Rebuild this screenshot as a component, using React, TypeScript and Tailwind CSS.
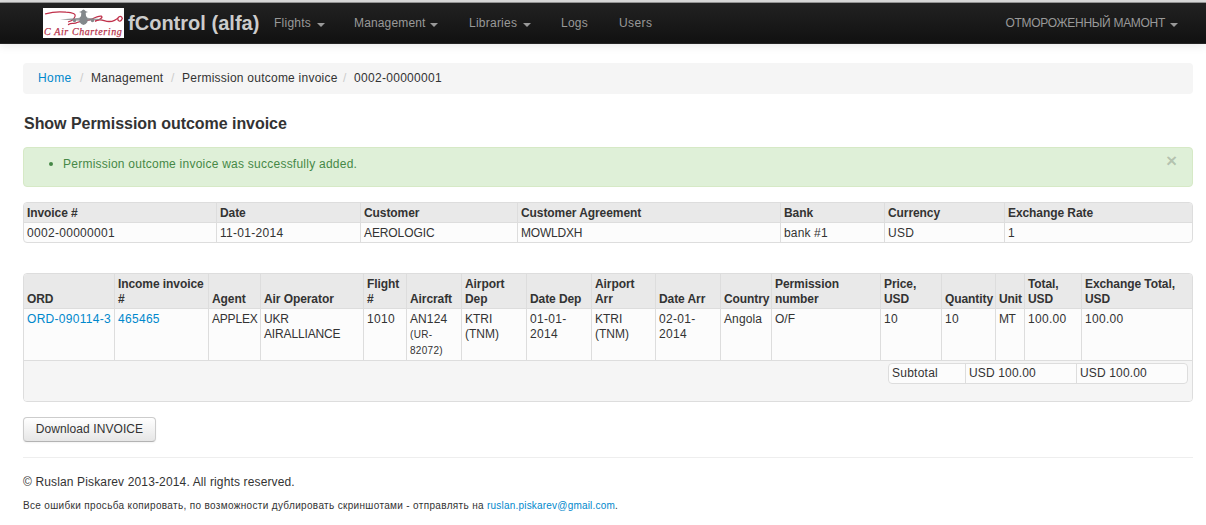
import type { ReactNode } from "react";

const Caret = ({ className = "" }: { className?: string }) => (
  <span className={"inline-block h-0 w-0 border-x-4 border-t-4 border-x-transparent border-t-[#999] " + className} />
);

const Logo = () => (
  <svg className="mt-[5px] h-[30px] w-[81px] shrink-0 bg-white" viewBox="0 0 81 30">
    <g fill="none" stroke="#c0304a" strokeLinecap="round" strokeLinejoin="round">
      <path d="M2.500 5.800C9 4 17 3.500 23 4.200C29 4.500 34 5.500 31.500 9.500C30.500 12 28 13 25.500 13.800" strokeWidth="1.200" />
      <path d="M25.500 16.500C29 14 31 16.500 34 14.500C40 12 45 13 49 11C53 9 56 7.500 58.500 8.200C60.500 9.500 56 12 52.500 13" strokeWidth="1.300" />
      <path d="M52.500 13C58 10 61 13.500 66 13.500C71 13.500 75 10 76 8.800C78 7.500 80.500 10 78.500 12C77 14 74.500 13 75 11" strokeWidth="1.300" />
    </g>
    <g fill="#83888b">
      <path d="M17 11.500L37 9.800H44L61 11.500L44 12.800H37Z" fillOpacity="0.8" />
      <path d="M38.500 3Q40.500 0 42.500 3L43 8L44.500 10V14Q42.500 17 40.500 17Q38.500 17 36.500 14V10L38 8Z" />
      <path d="M36 4L40.500 2.500L45 4L40.500 5.500Z" />
      <circle cx="31.500" cy="12.500" r="1.700" />
      <circle cx="49.500" cy="12.500" r="1.700" />
    </g>
    <text x="1" y="27" textLength="78" fill="#b8364e" stroke="#b8364e" strokeWidth="0.250" fontFamily="Liberation Serif, serif" fontStyle="italic" fontSize="10">
      C Air Chartering
    </text>
  </svg>
);

type Cell = { w: string; head: ReactNode; body: ReactNode };

const invoice: Cell[] = [
  { w: "w-[193px]", head: "Invoice #", body: "0002-00000001" },
  { w: "w-[144px]", head: "Date", body: "11-01-2014" },
  { w: "w-[157px]", head: "Customer", body: <span className="tracking-[-0.1px]">AEROLOGIC</span> },
  { w: "w-[263px]", head: "Customer Agreement", body: <span className="tracking-[-0.2px]">MOWLDXH</span> },
  { w: "w-[104px]", head: "Bank", body: <span className="tracking-[0.15px]">bank #1</span> },
  { w: "w-[120px]", head: "Currency", body: "USD" },
  { w: "w-[188px]", head: "Exchange Rate", body: "1" },
];

const items: Cell[] = [
  { w: "w-[91px]", head: "ORD", body: <a className="text-[#0088cc]">ORD-090114-3</a> },
  { w: "w-[94px]", head: <>Income invoice<br />#</>, body: <a className="text-[#0088cc]">465465</a> },
  { w: "w-[52px]", head: "Agent", body: <span className="tracking-[-0.2px]">APPLEX</span> },
  { w: "w-[103px]", head: "Air Operator", body: <span className="tracking-[-0.15px]">UKR<br />AIRALLIANCE</span> },
  { w: "w-[43px]", head: <>Flight<br />#</>, body: "1010" },
  { w: "w-[55px]", head: "Aircraft", body: <><span className="tracking-[0.1px]">AN124</span><span className="block text-[10px] leading-4">(UR-<br />82072)</span></> },
  { w: "w-[65px]", head: <>Airport<br />Dep</>, body: <span className="tracking-[0px]">KTRI<br />(TNM)</span> },
  { w: "w-[65px]", head: "Date Dep", body: <>01-01-<br />2014</> },
  { w: "w-[64px]", head: <>Airport<br />Arr</>, body: <span className="tracking-[0px]">KTRI<br />(TNM)</span> },
  { w: "w-[65px]", head: "Date Arr", body: <>02-01-<br />2014</> },
  { w: "w-[51px]", head: "Country", body: <span className="tracking-[0.1px]">Angola</span> },
  { w: "w-[109px]", head: <>Permission<br />number</>, body: <span className="tracking-[0px]">O/F</span> },
  { w: "w-[61px]", head: <>Price,<br />USD</>, body: "10" },
  { w: "w-[54px]", head: "Quantity", body: "10" },
  { w: "w-[29px]", head: "Unit", body: <span className="tracking-[-0.5px]">MT</span> },
  { w: "w-[57px]", head: <>Total,<br />USD</>, body: "100.00" },
  { w: "w-[111px]", head: <>Exchange Total,<br />USD</>, body: "100.00" },
];

const Row = ({ cells, head = false, className }: { cells: Cell[]; head?: boolean; className: string }) => (
  <div className={"flex " + className}>
    {cells.map((c, i) => (
      <div
        key={i}
        className={
          "flex shrink-0 whitespace-nowrap border-l border-[#ddd] pl-[3px] first:ml-[-1px] " +
          (head ? "items-end pb-px font-bold tracking-[-0.08px] " : "items-start pt-[3px] tracking-[0.3px] ") +
          c.w
        }
      >
        <div>{head ? c.head : c.body}</div>
      </div>
    ))}
  </div>
);

export default function App() {
  return (
    <div className="h-[525px] w-[1206px] overflow-hidden bg-white font-['Liberation_Sans',Arial,sans-serif] text-[12px] leading-[15px] tracking-[0.24px] text-[#333]">
      <div className="h-[3px] border-b border-[#999] bg-[#ddd]" />
      <nav className="flex h-[41px] border-b border-[#252525] bg-linear-to-b from-[#222] to-[#111] pl-[43px] text-[#999] shadow-[0_1px_10px_rgba(0,0,0,0.1)]">
        <Logo />
        <div className="ml-1 w-[146px] whitespace-nowrap pt-[9px] text-[20px] font-bold leading-[22px] tracking-[0.02px] text-[#ccc]">fControl (alfa)</div>
        <div className="flex flex-1 whitespace-nowrap pt-[13px]">
          <div className="w-[80px]">Flights <Caret className="ml-[2px]" /></div>
          <div className="w-[115px] tracking-[0.15px]">Management <Caret className="ml-px" /></div>
          <div className="w-[92px]">Libraries <Caret className="ml-[2px]" /></div>
          <div className="w-[58px]">Logs</div>
          <div className="tracking-[0.4px]">Users</div>
          <div className="ml-auto pr-[28px] tracking-[-0.3px]">ОТМОРОЖЕННЫЙ МАМОНТ <Caret className="ml-[2px]" /></div>
        </div>
      </nav>

      <main className="ml-[23px] w-[1170px] pt-[19px]">
        <div className="flex h-[31px] whitespace-nowrap rounded bg-[#f5f5f5] pl-[15px] pt-2">
          <a className="w-[42px] tracking-[0.4px] text-[#0088cc]">Home</a>
          <span className="w-[11px] text-[#ccc]">/</span>
          <span className="w-[80px]">Management</span>
          <span className="w-[11px] text-[#ccc]">/</span>
          <span className="w-[161px]">Permission outcome invoice</span>
          <span className="w-[11px] text-[#ccc]">/</span>
          <span className="tracking-[0.3px]">0002-00000001</span>
        </div>

        <h1 className="mt-5 pl-px text-[16px] font-bold leading-5 tracking-[-0.04px]">Show Permission outcome invoice</h1>

        <div className="mt-[13px] flex h-10 justify-between rounded border border-[#d6e9c6] bg-[#dff0d8] pl-[25px] pr-[15px] pt-[9px] text-[#468847]">
          <div className="flex">
            <span className="mt-[5px] mr-[10px] h-1 w-1 rounded-full bg-[#468847]" />
            <span>Permission outcome invoice was successfully added.</span>
          </div>
          <span className="-mt-[4px] text-[19px] font-bold leading-4 tracking-[0px] text-black/20">×</span>
        </div>

        <section className="mt-[15px] h-[41px] overflow-hidden rounded border border-[#ddd] bg-[#fcfcfc]">
          <Row cells={invoice} head className="h-[19px] bg-[#e9e9e9]" />
          <Row cells={invoice} className="h-5 border-t border-[#ddd]" />
        </section>

        <section className="mt-[30px] h-[129px] overflow-hidden rounded border border-[#ddd] bg-[#fcfcfc]">
          <Row cells={items} head className="h-[34px] bg-[#e9e9e9]" />
          <Row cells={items} className="h-[52px] border-t border-[#ddd]" />
          <div className="flex h-[42px] justify-end border-t border-[#ddd] bg-[#f5f5f5] pr-1 pt-[2px]">
            <div className="flex h-[21px] rounded border border-[#ddd] bg-[#fcfcfc] leading-[19px]">
              <div className="w-[76px] pl-[3px]">Subtotal</div>
              <div className="w-[111px] border-l border-[#ddd] pl-[3px] tracking-[0.15px]">USD 100.00</div>
              <div className="w-[111px] border-l border-[#ddd] pl-[3px] tracking-[0.15px]">USD 100.00</div>
            </div>
          </div>
        </section>

        <button className="mt-[15px] block h-[25px] w-[133px] whitespace-nowrap rounded border border-[#ccc] border-b-[#b3b3b3] bg-linear-to-b from-white to-[#e6e6e6] tracking-[0.08px] shadow-[inset_0_1px_0_rgba(255,255,255,0.2),0_1px_2px_rgba(0,0,0,0.05)]">
          Download INVOICE
        </button>

        <footer className="mt-[15px] border-t border-[#eee] pt-[17px]">
          <p className="tracking-[0.14px]">© Ruslan Piskarev 2013-2014. All rights reserved.</p>
          <p className="mt-2 whitespace-nowrap text-[10px] tracking-[0.335px]">
            Все ошибки просьба копировать, по возможности дублировать скриншотами - отправлять на <a className="tracking-[0.2px] text-[#0088cc]">ruslan.piskarev@gmail.com</a>.
          </p>
        </footer>
      </main>
    </div>
  );
}
